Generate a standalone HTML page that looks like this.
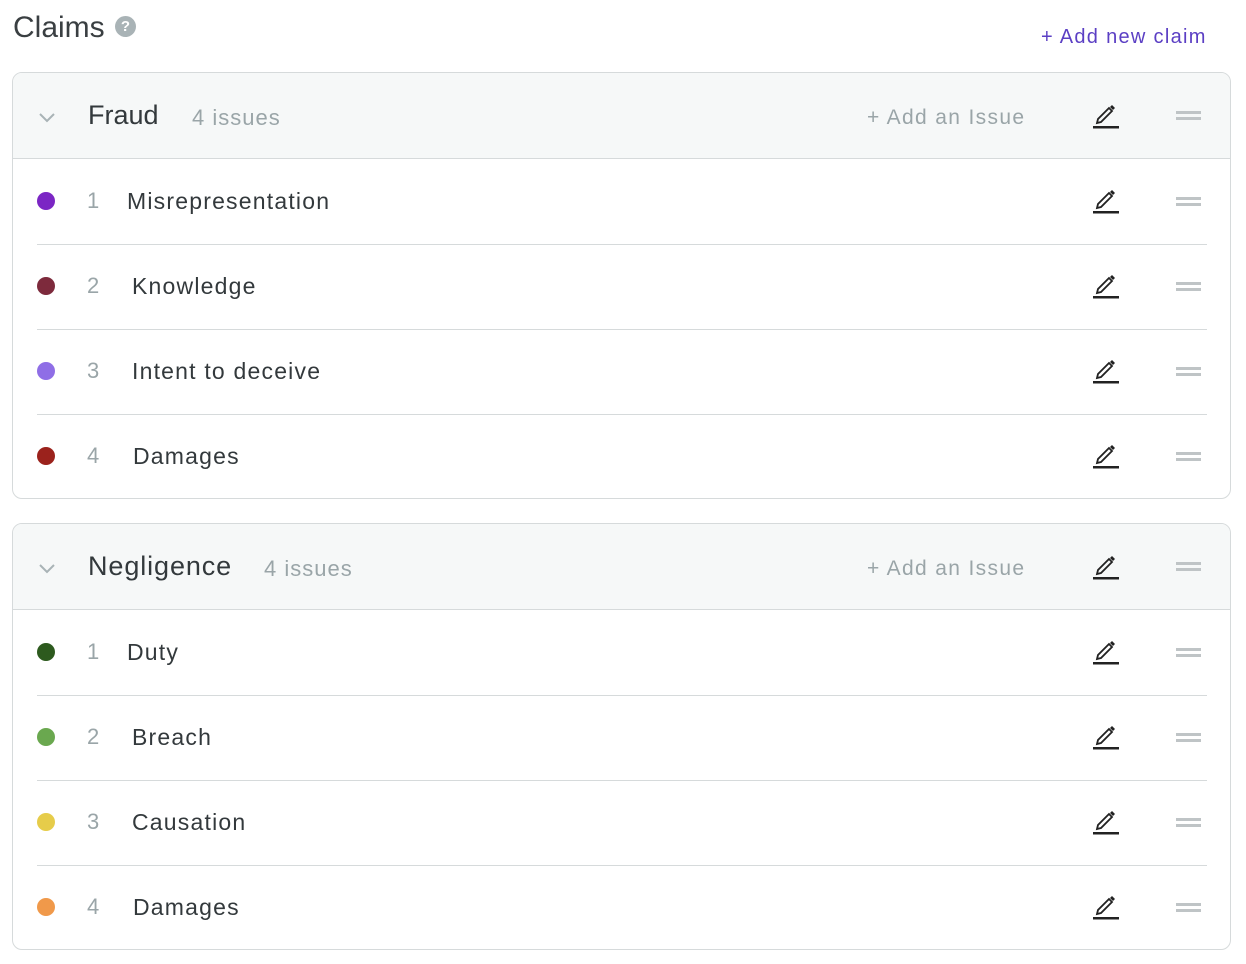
<!DOCTYPE html>
<html><head><meta charset="utf-8"><style>
body{margin:0;width:1246px;height:964px;background:#fff;font-family:"Liberation Sans",sans-serif;position:relative;overflow:hidden}
.abs{position:absolute}
.title{left:13px;top:11px;font-size:30px;color:#3a3f42}
.q{left:115px;top:16px;width:21px;height:21px;border-radius:50%;background:#a9b3b6;color:#fff;font-size:15px;font-weight:bold;text-align:center;line-height:21px}
.add{left:1041px;top:26px;font-size:20px;color:#5b3fc4;letter-spacing:1.3px}
.card{position:absolute;left:12px;width:1217px;height:425px;border:1px solid #d6dadb;border-radius:10px;overflow:hidden}
.hdr{position:absolute;left:0;top:0;width:100%;height:85px;background:#f6f8f8;border-bottom:1px solid #d6dadb}
.row{position:absolute;left:24px;width:1170px;height:85px;border-bottom:1px solid #d6dadb}
.row:last-child{border-bottom:none}
.dot{position:absolute;left:0px;top:33px;width:18px;height:18px;border-radius:50%}
.num{position:absolute;top:29px;font-size:22px;color:#9aa5a8}
.txt{position:absolute;top:29px;font-size:23px;color:#33393c;letter-spacing:1.2px}
.pen{position:absolute}
.drag{position:absolute;width:25px;border-top:3px solid #bfc4c6;border-bottom:3px solid #bfc4c6;box-sizing:border-box;height:9px}
.ht{position:absolute;top:27px;font-size:27px;color:#33393c}
.hi{position:absolute;top:32px;font-size:22px;color:#9aa5a8;letter-spacing:1px}
.ha{position:absolute;left:854px;top:33px;font-size:21px;color:#9aa5a8;letter-spacing:1.35px}
</style></head><body>
<div class="abs title">Claims</div>
<div class="abs q">?</div>
<div class="abs add">+ Add new claim</div>

<div class="card" style="top:72px">
 <div class="hdr">
  <svg class="abs" style="left:25px;top:39px" width="18" height="12"><path d="M2 2l7 7 7-7" fill="none" stroke="#a9b3b6" stroke-width="2"/></svg>
  <div class="ht" style="left:75px">Fraud</div>
  <div class="hi" style="left:179px">4 issues</div>
  <div class="ha">+ Add an Issue</div>
  <svg class="pen" style="left:1080px;top:30px" width="26" height="26"><path d="M4 20l1-4L16 5l3 3L8 19z" fill="none" stroke="#222" stroke-width="1.8"/><path d="M17 4l2-2 3 3-2 2z" fill="#222"/><rect x="0" y="23" width="26" height="2.5" fill="#222"/></svg>
  <div class="drag" style="left:1163px;top:38px"></div>
 </div>
 <div class="row" style="top:86px"><div class="dot" style="background:#7b26c4"></div><div class="num" style="left:50px">1</div><div class="txt" style="left:90px">Misrepresentation</div>
  <svg class="pen" style="left:1056px;top:29px" width="26" height="26"><path d="M4 20l1-4L16 5l3 3L8 19z" fill="none" stroke="#222" stroke-width="1.8"/><path d="M17 4l2-2 3 3-2 2z" fill="#222"/><rect x="0" y="23" width="26" height="2.5" fill="#222"/></svg><div class="drag" style="left:1139px;top:38px"></div></div>
 <div class="row" style="top:171px"><div class="dot" style="background:#7d2a3c"></div><div class="num" style="left:50px">2</div><div class="txt" style="left:95px">Knowledge</div>
  <svg class="pen" style="left:1056px;top:29px" width="26" height="26"><path d="M4 20l1-4L16 5l3 3L8 19z" fill="none" stroke="#222" stroke-width="1.8"/><path d="M17 4l2-2 3 3-2 2z" fill="#222"/><rect x="0" y="23" width="26" height="2.5" fill="#222"/></svg><div class="drag" style="left:1139px;top:38px"></div></div>
 <div class="row" style="top:256px"><div class="dot" style="background:#8f6ee6"></div><div class="num" style="left:50px">3</div><div class="txt" style="left:95px">Intent to deceive</div>
  <svg class="pen" style="left:1056px;top:29px" width="26" height="26"><path d="M4 20l1-4L16 5l3 3L8 19z" fill="none" stroke="#222" stroke-width="1.8"/><path d="M17 4l2-2 3 3-2 2z" fill="#222"/><rect x="0" y="23" width="26" height="2.5" fill="#222"/></svg><div class="drag" style="left:1139px;top:38px"></div></div>
 <div class="row" style="top:341px"><div class="dot" style="background:#9b221c"></div><div class="num" style="left:50px">4</div><div class="txt" style="left:96px">Damages</div>
  <svg class="pen" style="left:1056px;top:29px" width="26" height="26"><path d="M4 20l1-4L16 5l3 3L8 19z" fill="none" stroke="#222" stroke-width="1.8"/><path d="M17 4l2-2 3 3-2 2z" fill="#222"/><rect x="0" y="23" width="26" height="2.5" fill="#222"/></svg><div class="drag" style="left:1139px;top:38px"></div></div>
</div>

<div class="card" style="top:523px">
 <div class="hdr">
  <svg class="abs" style="left:25px;top:39px" width="18" height="12"><path d="M2 2l7 7 7-7" fill="none" stroke="#a9b3b6" stroke-width="2"/></svg>
  <div class="ht" style="left:75px;letter-spacing:0.9px">Negligence</div>
  <div class="hi" style="left:251px">4 issues</div>
  <div class="ha">+ Add an Issue</div>
  <svg class="pen" style="left:1080px;top:30px" width="26" height="26"><path d="M4 20l1-4L16 5l3 3L8 19z" fill="none" stroke="#222" stroke-width="1.8"/><path d="M17 4l2-2 3 3-2 2z" fill="#222"/><rect x="0" y="23" width="26" height="2.5" fill="#222"/></svg>
  <div class="drag" style="left:1163px;top:38px"></div>
 </div>
 <div class="row" style="top:86px"><div class="dot" style="background:#2d5a1e"></div><div class="num" style="left:50px">1</div><div class="txt" style="left:90px">Duty</div>
  <svg class="pen" style="left:1056px;top:29px" width="26" height="26"><path d="M4 20l1-4L16 5l3 3L8 19z" fill="none" stroke="#222" stroke-width="1.8"/><path d="M17 4l2-2 3 3-2 2z" fill="#222"/><rect x="0" y="23" width="26" height="2.5" fill="#222"/></svg><div class="drag" style="left:1139px;top:38px"></div></div>
 <div class="row" style="top:171px"><div class="dot" style="background:#6aa84f"></div><div class="num" style="left:50px">2</div><div class="txt" style="left:95px">Breach</div>
  <svg class="pen" style="left:1056px;top:29px" width="26" height="26"><path d="M4 20l1-4L16 5l3 3L8 19z" fill="none" stroke="#222" stroke-width="1.8"/><path d="M17 4l2-2 3 3-2 2z" fill="#222"/><rect x="0" y="23" width="26" height="2.5" fill="#222"/></svg><div class="drag" style="left:1139px;top:38px"></div></div>
 <div class="row" style="top:256px"><div class="dot" style="background:#e6cc4a"></div><div class="num" style="left:50px">3</div><div class="txt" style="left:95px">Causation</div>
  <svg class="pen" style="left:1056px;top:29px" width="26" height="26"><path d="M4 20l1-4L16 5l3 3L8 19z" fill="none" stroke="#222" stroke-width="1.8"/><path d="M17 4l2-2 3 3-2 2z" fill="#222"/><rect x="0" y="23" width="26" height="2.5" fill="#222"/></svg><div class="drag" style="left:1139px;top:38px"></div></div>
 <div class="row" style="top:341px"><div class="dot" style="background:#f0994a"></div><div class="num" style="left:50px">4</div><div class="txt" style="left:96px">Damages</div>
  <svg class="pen" style="left:1056px;top:29px" width="26" height="26"><path d="M4 20l1-4L16 5l3 3L8 19z" fill="none" stroke="#222" stroke-width="1.8"/><path d="M17 4l2-2 3 3-2 2z" fill="#222"/><rect x="0" y="23" width="26" height="2.5" fill="#222"/></svg><div class="drag" style="left:1139px;top:38px"></div></div>
</div>
</body></html>
